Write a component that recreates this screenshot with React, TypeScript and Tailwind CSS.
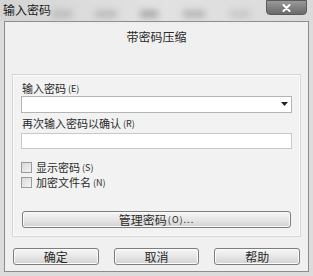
import React from 'react';

const font = { fontFamily: '"Noto Sans CJK SC", "Liberation Sans", sans-serif' };

const Hint: React.FC<{ children: React.ReactNode }> = ({ children }) => (
    <span className="text-[9px] leading-none ml-[2px]">{children}</span>
);

const Checkbox: React.FC<{ label: string; hint: string }> = ({ label, hint }) => (
    <div className="flex items-center h-[15px] gap-[4px]">
        <div className="w-[11px] h-[11px] border border-[#9a9a9a] bg-gradient-to-br from-[#d8d8d8] to-[#f4f4f4]"></div>
        <div className="h-[13px] flex items-center text-[11px] leading-[13px] text-[#2a2a2a]">
            {label}
            <Hint>{hint}</Hint>
        </div>
    </div>
);

const Button: React.FC<{ children: React.ReactNode; className?: string }> = ({ children, className }) => (
    <div
        className={`h-[17px] border border-[#7d7d7d] rounded-[3px] bg-gradient-to-b from-[#f6f6f6] via-[#e6e6e6] to-[#d2d2d2] flex items-center justify-center text-[12px] leading-[14px] text-[#2a2a2a] shadow-[inset_0_0_0_1px_#fbfbfb] ${className ?? ''}`}
    >
        {children}
    </div>
);

export default function App() {
    return (
        <div className="w-[313px] h-[276px] bg-[#dcdcdc] flex flex-col overflow-hidden" style={font}>
            {/* title bar */}
            <div className="relative h-[21px] shrink-0 bg-gradient-to-r from-[#d4d4d4] via-[#e2e2e2] to-[#dadada]">
                <span className="absolute left-[3px] top-[2px] text-[12px] leading-[16px] text-[#1a1a1a]">输入密码</span>
                <div className="absolute left-[52px] top-[10px] w-[20px] h-[8px] bg-[#bdbdbd] blur-[3px]"></div>
                <div className="absolute left-[95px] top-[10px] w-[22px] h-[8px] bg-[#bdbdbd] blur-[3px]"></div>
                <div className="absolute left-[140px] top-[10px] w-[18px] h-[8px] bg-[#adadad] blur-[3px]"></div>
                <div className="absolute left-[183px] top-[10px] w-[22px] h-[8px] bg-[#b8b8b8] blur-[3px]"></div>
                <div className="absolute left-[230px] top-[10px] w-[20px] h-[8px] bg-[#c8c8c8] blur-[3px]"></div>
                <div className="absolute right-[6px] top-0 w-[41px] h-[15px] rounded-b-[4px] border border-[#5a5a5a] bg-gradient-to-b from-[#9a9a9a] to-[#6a6a6a] flex items-center justify-center">
                    <svg width="9" height="8" viewBox="0 0 9 8">
                        <path d="M1.5 1 L7.5 7 M7.5 1 L1.5 7" stroke="#ffffff" strokeWidth="2" strokeLinecap="round" />
                    </svg>
                </div>
            </div>

            {/* main panel */}
            <div className="mx-[4px] mb-[4px] flex-1 border border-[#8c8c8c] bg-[#f0f0f0] flex flex-col">
                <div className="h-[52px] shrink-0 pt-[8px] text-center text-[12px] leading-[14px] text-[#2a2a2a]">带密码压缩</div>

                {/* group box */}
                <div className="mx-[7px] h-[163px] shrink-0 border border-[#d6d6d6] bg-[#f2f2f2] shadow-[inset_0_0_0_1px_#fafafa] px-[8px] pt-[6px] flex flex-col">
                    <div className="h-[14px] flex items-center text-[11px] leading-[13px] text-[#2a2a2a] pl-[1px]">
                        输入密码<Hint>(E)</Hint>
                    </div>
                    <div className="mt-[1px] h-[17px] shrink-0 border border-[#b4b4b4] bg-white relative">
                        <svg className="absolute right-[3px] top-[5px]" width="7" height="4" viewBox="0 0 7 4">
                            <path d="M0 0 H7 L3.5 4 Z" fill="#222" />
                        </svg>
                    </div>
                    <div className="mt-[3px] h-[14px] flex items-center text-[11px] leading-[13px] text-[#2a2a2a] pl-[1px]">
                        再次输入密码以确认<Hint>(R)</Hint>
                    </div>
                    <div className="mt-[3px] h-[16px] shrink-0 border border-[#c8c8c8] bg-white"></div>

                    <div className="mt-[11px] flex flex-col">
                        <Checkbox label="显示密码" hint="(S)" />
                        <Checkbox label="加密文件名" hint="(N)" />
                    </div>

                    <Button className="mt-[21px] mx-[1px] shrink-0">
                        管理密码<span className="text-[9px] leading-none ml-[1px] tracking-[1px]">(O)...</span>
                    </Button>
                </div>

                {/* bottom buttons */}
                <div className="mt-[11px] mx-[8px] flex gap-[15px]">
                    <Button className="flex-1">确定</Button>
                    <Button className="flex-1">取消</Button>
                    <Button className="flex-1">帮助</Button>
                </div>
            </div>
        </div>
    );
}
